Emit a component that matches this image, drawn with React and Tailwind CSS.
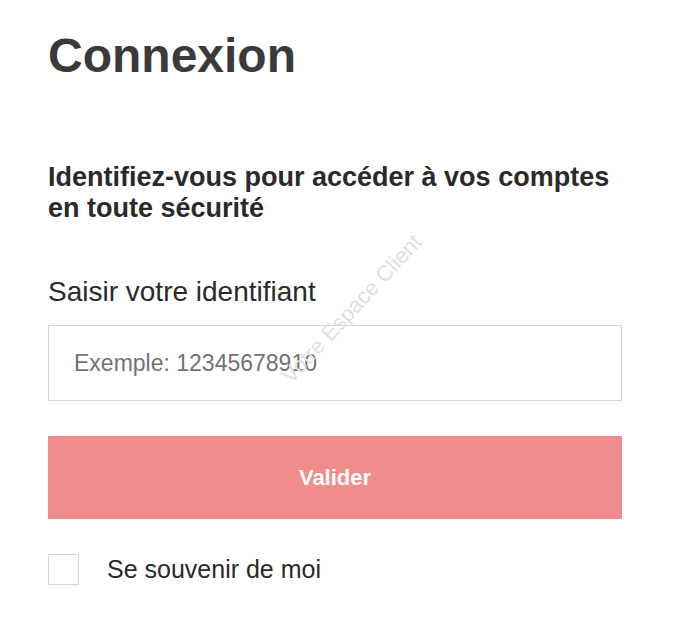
import React from "react";

export default function App() {
  return (
    <div className="relative w-[700px] h-[622px] bg-white overflow-hidden" style={{ fontFamily: '"Liberation Sans", Arial, sans-serif' }}>
      <div className="flex flex-col pl-[48px] w-[622px] pt-[26px]">
        <h1 className="text-[48px] leading-[60px] font-bold text-[#3a3a3a]">Connexion</h1>
        <p className="mt-[76px] text-[27px] leading-[31px] font-bold text-[#2a2a2a] whitespace-nowrap">
          Identifiez-vous pour accéder à vos comptes
          <br />
          en toute sécurité
        </p>
        <label className="mt-[52px] text-[28px] leading-[32px] text-[#2a2a2a]">Saisir votre identifiant</label>
        <div className="mt-[17px] h-[76px] border border-[#d6d6d6] flex items-center pl-[25px]">
          <span className="text-[23px] text-[#727272]">Exemple: 12345678910</span>
        </div>
        <button className="mt-[35px] h-[83px] bg-[#f08d8c] text-white text-[22px] font-bold flex items-center justify-center">
          Valider
        </button>
        <div className="mt-[32px] flex items-center">
          <div className="w-[31px] h-[31px] border border-[#d6d6d6]" />
          <span className="ml-[28px] text-[25px] text-[#2a2a2a]">Se souvenir de moi</span>
        </div>
      </div>
      <div className="absolute left-[222px] top-[296px] w-[260px] leading-[26px] text-center text-[22px] text-[#e0e0e0] -rotate-[47deg] pointer-events-none">
        Votre Espace Client
      </div>
    </div>
  );
}
